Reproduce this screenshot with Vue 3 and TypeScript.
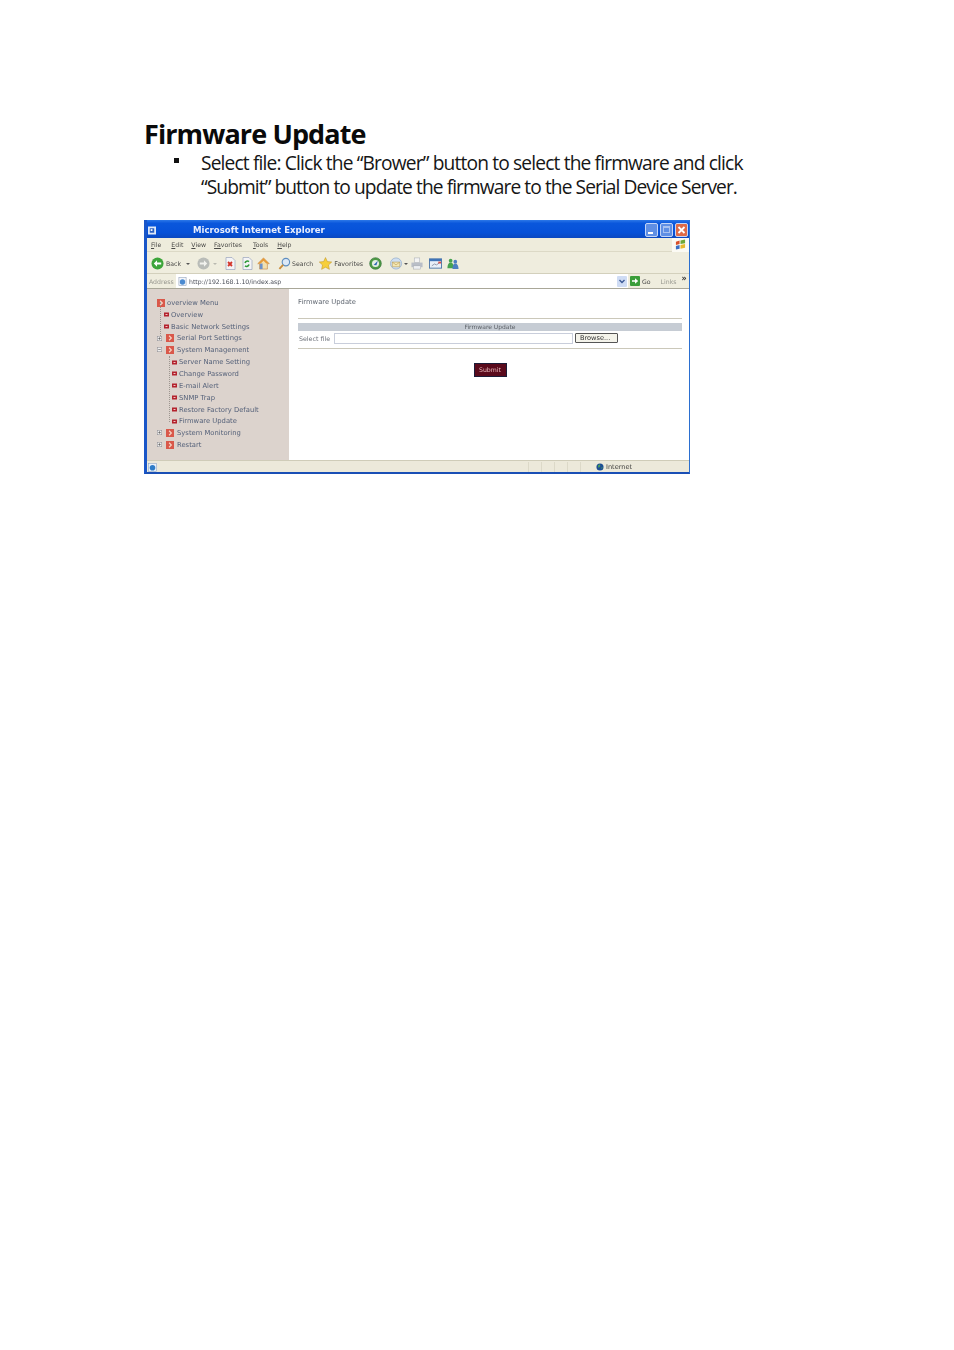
<script setup lang="ts">
interface TreeRow {
  label: string
  kind: 'root' | 'leaf' | 'folder' | 'sub'
  toggle?: '+' | '-'
}

const menus = [
  { key: 'F', rest: 'ile', cls: 'm-file' },
  { key: 'E', rest: 'dit', cls: 'm-edit' },
  { key: 'V', rest: 'iew', cls: 'm-view' },
  { key: 'Fa', rest: 'vorites', cls: 'm-fav' },
  { key: 'T', rest: 'ools', cls: 'm-tools' },
  { key: 'H', rest: 'elp', cls: 'm-help' },
]

const rows: TreeRow[] = [
  { label: 'overview Menu', kind: 'root' },
  { label: 'Overview', kind: 'leaf' },
  { label: 'Basic Network Settings', kind: 'leaf' },
  { label: 'Serial Port Settings', kind: 'folder', toggle: '+' },
  { label: 'System Management', kind: 'folder', toggle: '-' },
  { label: 'Server Name Setting', kind: 'sub' },
  { label: 'Change Password', kind: 'sub' },
  { label: 'E-mail Alert', kind: 'sub' },
  { label: 'SNMP Trap', kind: 'sub' },
  { label: 'Restore Factory Default', kind: 'sub' },
  { label: 'Firmware Update', kind: 'sub' },
  { label: 'System Monitoring', kind: 'folder', toggle: '+' },
  { label: 'Restart', kind: 'folder', toggle: '+' },
]
</script>

<template>
  <main class="page">
    <h1 class="title">Firmware Update</h1>
    <ul class="bullets">
      <li>
        <span class="line1">Select file: Click the “Brower” button to select the firmware and click</span>
        <span class="line2">“Submit” button to update the firmware to the Serial Device Server.</span>
      </li>
    </ul>

    <section class="window">
      <header class="titlebar">
        <svg class="app-icon" viewBox="0 0 9 9"><rect width="9" height="9" fill="#dfe9f8" /><rect x="2" y="2" width="5" height="5" fill="#2a5fc0" /><rect x="3" y="3" width="2" height="2" fill="#fff" /></svg>
        <span class="caption">Microsoft Internet Explorer</span>
        <div class="win-btns">
          <span class="wb wb-min"><i class="glyph-min"></i></span>
          <span class="wb wb-max"><i class="glyph-max"></i></span>
          <span class="wb wb-close">
            <svg viewBox="0 0 13 13"><path d="M3.5 3.5l6 6M9.5 3.5l-6 6" stroke="#fff" stroke-width="1.8" /></svg>
          </span>
        </div>
      </header>

      <nav class="menubar">
        <span v-for="m in menus" :key="m.cls" class="menu-item" :class="m.cls"><u>{{ m.key }}</u>{{ m.rest }}</span>
        <span class="flag-box">
          <svg viewBox="0 0 12 12" class="flag"><path d="M1 3l4-1.500v4l-4 1z" fill="#d8502a" /><path d="M6 1.500l5-1v4l-5 1z" fill="#6fa838" /><path d="M1 7.500l4-1v4l-4 1z" fill="#3b6fc4" /><path d="M6 6.500l5-1v4l-5 1z" fill="#e8b92e" /></svg>
        </span>
      </nav>

      <div class="toolbar">
        <svg class="ti t-back" viewBox="0 0 14 14"><circle cx="7" cy="7" r="6.500" fill="#3da53a" /><path d="M11 6H6.500V3.500L3 7l3.500 3.500V8H11z" fill="#fff" /></svg>
        <span class="tt t-back-l">Back</span>
        <i class="caret c-back"></i>
        <svg class="ti t-fwd" viewBox="0 0 14 14"><circle cx="7" cy="7" r="6.500" fill="#b9bcb8" /><path d="M3 6h4.500V3.500L11 7l-3.500 3.500V8H3z" fill="#f2f2ee" /></svg>
        <i class="caret c-fwd"></i>
        <svg class="ti t-stop" viewBox="0 0 12 13"><path d="M2 .5h6l3 3v9H2z" fill="#f4f4f6" stroke="#9aa3bd" stroke-width=".7" /><path d="M4 5l4 4M8 5L4 9" stroke="#d3352a" stroke-width="1.800" /></svg>
        <svg class="ti t-ref" viewBox="0 0 12 13"><path d="M2 .5h6l3 3v9H2z" fill="#f4f4f6" stroke="#9aa3bd" stroke-width=".7" /><path d="M4 6a2.500 2.500 0 0 1 4-1.300M8 7.500a2.500 2.500 0 0 1-4 1.300" fill="none" stroke="#2f9a3a" stroke-width="1.500" /></svg>
        <svg class="ti t-home" viewBox="0 0 14 14"><path d="M7 1L.8 7.200h2V13h8.400V7.200h2z" fill="#f2dfae" stroke="#c07a30" stroke-width=".6" /><rect x="3" y="7" width="3" height="6" fill="#6d90c8" /><path d="M7 1L1 7h3l3-3 3 3h3z" fill="#e59a3a" /></svg>
        <svg class="ti t-search" viewBox="0 0 14 14"><circle cx="8.500" cy="5.500" r="4" fill="#dce9f7" stroke="#5e8ec0" stroke-width="1.200" /><path d="M5.500 8.500L1.500 12.800" stroke="#c98d3b" stroke-width="2" /></svg>
        <span class="tt t-search-l">Search</span>
        <svg class="ti t-star" viewBox="0 0 14 14"><path d="M7 .6l2 4.300 4.700.5-3.500 3.200 1 4.700L7 11l-4.200 2.300 1-4.700L.3 5.400 5 4.900z" fill="#f6cf3b" stroke="#b68a1e" stroke-width=".5" /></svg>
        <span class="tt t-star-l">Favorites</span>
        <svg class="ti t-media" viewBox="0 0 14 14"><circle cx="7" cy="7" r="6.300" fill="#4e9a45" stroke="#2e6a35" stroke-width=".6" /><circle cx="7" cy="7" r="3.800" fill="#e5efe2" /><path d="M5 8.500L9.500 4 8 9z" fill="#2f67b4" /></svg>
        <svg class="ti t-mail" viewBox="0 0 14 14"><circle cx="6.500" cy="7" r="6" fill="#cfdff2" stroke="#7c9cc6" stroke-width=".6" /><path d="M2.500 5.500h8v5h-8z" fill="#f5e7b3" stroke="#b3974d" stroke-width=".6" /><path d="M2.500 5.500l4 3 4-3" fill="none" stroke="#b3974d" stroke-width=".6" /></svg>
        <i class="caret c-mail"></i>
        <svg class="ti t-print" viewBox="0 0 14 14"><rect x="4" y="1" width="6" height="5" fill="#f4f4f4" stroke="#9ea3ab" stroke-width=".5" /><path d="M1 6h12v5H1z" fill="#b9bec7" /><rect x="3" y="9.500" width="8" height="3.500" fill="#eef0f2" stroke="#9ea3ab" stroke-width=".5" /></svg>
        <svg class="ti t-edit" viewBox="0 0 14 14"><rect x=".5" y="2" width="13" height="10" fill="#e9eff7" stroke="#4d76a8" /><rect x=".5" y="2" width="13" height="2.500" fill="#3f74b7" /><path d="M3 9.500l3-2 2 1 3-2" fill="none" stroke="#8a94a8" /><rect x="10" y="5" width="3" height="2" fill="#d9504a" /></svg>
        <svg class="ti t-msg" viewBox="0 0 14 14"><circle cx="5" cy="4" r="2" fill="#46a350" /><path d="M1.500 12c0-4 1.500-6 3.500-6s3.500 2 3.500 6z" fill="#46a350" /><circle cx="10" cy="5" r="2" fill="#4b7fc2" /><path d="M7 13c0-4 1-6 3-6s3.500 2 3.500 6z" fill="#4b7fc2" /></svg>
      </div>

      <div class="addressbar">
        <span class="addr-label">Address</span>
        <div class="addr-input">
          <svg class="page-icon" viewBox="0 0 10 10"><rect x="1" y=".5" width="8" height="9" fill="#f4f6fa" stroke="#8b9bb5" stroke-width=".6" /><circle cx="5" cy="5.500" r="3" fill="#4b8ad0" /></svg>
          <span class="addr-url">http://192.168.1.10/index.asp</span>
          <span class="addr-drop">
            <svg viewBox="0 0 10 10"><path d="M2.500 3.500L5 6l2.500-2.500" fill="none" stroke="#3c5a96" stroke-width="1.400" /></svg>
          </span>
        </div>
        <svg class="go-icon" viewBox="0 0 10 10"><rect width="10" height="10" rx="1" fill="#3b9e3a" /><path d="M2 4.200h3V2.300L8.200 5 5 7.700V5.800H2z" fill="#fff" /></svg>
        <span class="go-label">Go</span>
        <span class="links">Links</span>
        <span class="chev">»</span>
      </div>

      <div class="client">
        <aside class="sidebar">
          <ul class="tree">
            <li v-for="r in rows" :key="r.label" class="row" :class="'row-' + r.kind">
              <svg v-if="r.toggle" class="toggle" viewBox="0 0 5 5">
                <rect x=".25" y=".25" width="4.500" height="4.500" fill="#eeeeee" stroke="#8a8a90" stroke-width=".5" />
                <path d="M1.200 2.500h2.600" stroke="#555" stroke-width=".6" />
                <path v-if="r.toggle === '+'" d="M2.500 1.200v2.600" stroke="#555" stroke-width=".6" />
              </svg>
              <svg v-if="r.kind === 'root' || r.kind === 'folder'" class="folder-icon" viewBox="0 0 9 9">
                <rect width="9" height="9" fill="#d9584a" />
                <path d="M3.500 2L6 4.500 3.500 7" fill="none" stroke="#f6d8c8" stroke-width="1.300" />
              </svg>
              <svg v-else class="leaf-icon" viewBox="0 0 5 5">
                <rect y=".5" width="5" height="4" fill="#b3222d" />
                <rect x="1.500" y="2" width="2" height="1" fill="#f0c4c4" />
              </svg>
              <span class="label">{{ r.label }}</span>
            </li>
          </ul>
          <i class="vline vline-top"></i>
          <i class="vline vline-sub"></i>
        </aside>

        <div class="content">
          <p class="heading">Firmware Update</p>
          <hr class="rule rule-top" />
          <div class="band">Firmware Update</div>
          <div class="file-row">
            <span class="file-label">Select file</span>
            <span class="file-input"></span>
            <span class="browse">Browse...</span>
          </div>
          <hr class="rule rule-bottom" />
          <div class="submit-wrap"><span class="submit">Submit</span></div>
        </div>
      </div>

      <footer class="statusbar">
        <svg class="status-ie" viewBox="0 0 9 9"><rect x=".5" y=".5" width="8" height="8" fill="#e9f1fb" stroke="#7f9cc4" stroke-width=".5" /><circle cx="4.500" cy="4.800" r="2.800" fill="#2f7dc8" /></svg>
        <span class="cell c1"></span>
        <span class="cell"></span>
        <span class="cell"></span>
        <span class="cell"></span>
        <span class="cell"></span>
        <svg class="globe" viewBox="0 0 9 9"><circle cx="4.500" cy="4.500" r="4" fill="#1d4f94" /><path d="M2 3l2-1.500 1 2-2 2zM6 5l1.500-.5L6.500 7z" fill="#4aa25a" /></svg>
        <span class="zone">Internet</span>
      </footer>
    </section>
  </main>
</template>

<style scoped>
.page {
  box-sizing: border-box;
  width: 954px;
  height: 1350px;
  padding: 118px 0 0 144px;
  background: #fff;
  color: #111;
  font-family: "Noto Sans", "Open Sans", sans-serif;
}
.title {
  margin: 0 0 1px;
  font-family: "Open Sans", sans-serif;
  font-size: 27px;
  line-height: 32px;
  font-weight: 700;
  letter-spacing: -0.9px;
  color: #0a0a0a;
}
.bullets {
  list-style: none;
  margin: 0;
  padding: 0 0 0 57px;
  position: relative;
  font-family: "Open Sans", sans-serif;
  font-size: 19.2px;
  line-height: 24px;
  letter-spacing: -0.85px;
  color: #161616;
}
.bullets::before {
  content: "";
  position: absolute;
  left: 30px;
  top: 7px;
  width: 5px;
  height: 5px;
  background: #111;
}
.line1,
.line2 {
  display: block;
  white-space: nowrap;
}
.line2 {
  letter-spacing: -0.93px;
}
.window {
  box-sizing: border-box;
  width: 546px;
  height: 254px;
  margin-top: 21px;
  display: flex;
  flex-direction: column;
  border-left: 3px solid #1a56c8;
  border-right: 1px solid #2b6fd0;
  border-bottom: 2px solid #1a4fb5;
  font-family: "DejaVu Sans", Verdana, sans-serif;
  overflow: hidden;
  background: #fff;
  filter: blur(0.35px);
}
.titlebar {
  box-sizing: border-box;
  height: 18px;
  margin-left: -3px;
  margin-right: -1px;
  padding-left: 4px;
  padding-top: 2px;
  display: flex;
  align-items: center;
  flex: none;
  background: linear-gradient(180deg, #2c78e8 0%, #0a57dc 18%, #0651d8 70%, #0a48c0 100%);
}
.app-icon {
  width: 8px;
  height: 9px;
}
.caption {
  margin-left: 37px;
  font-size: 8.6px;
  font-weight: 700;
  color: #e9eefc;
  white-space: nowrap;
}
.win-btns {
  margin-left: auto;
  margin-right: 2px;
  display: flex;
  gap: 2px;
}
.wb {
  position: relative;
  display: block;
  box-sizing: border-box;
  width: 13px;
  height: 14px;
  border-radius: 2px;
  border: 1px solid #c3d5f7;
  background: #5f8fe4;
}
.wb-close {
  background: #dd6a48;
}
.wb-close svg {
  position: absolute;
  left: -1px;
  top: -1px;
  width: 13px;
  height: 14px;
}
.glyph-min {
  position: absolute;
  left: 2px;
  bottom: 2px;
  width: 5px;
  height: 2px;
  background: #fff;
}
.glyph-max {
  position: absolute;
  left: 2px;
  top: 2px;
  width: 7px;
  height: 7px;
  box-sizing: border-box;
  border: 1px solid #a9c2f0;
  border-top-width: 2px;
}
.menubar {
  position: relative;
  height: 14px;
  flex: none;
  display: flex;
  align-items: center;
  background: #eeecdc;
  border-bottom: 1px solid #dcd9c6;
  box-sizing: border-box;
  font-size: 6.2px;
  color: #4a4a48;
}
.menu-item {
  white-space: nowrap;
}
.menu-item u {
  text-underline-offset: 1px;
}
.m-file { margin-left: 4px; }
.m-edit { margin-left: 10px; }
.m-view { margin-left: 8px; }
.m-fav { margin-left: 8px; }
.m-tools { margin-left: 11px; }
.m-help { margin-left: 9px; }
.flag-box {
  margin-left: auto;
  width: 17px;
  height: 14px;
  display: flex;
  align-items: center;
  justify-content: center;
  background: #fbfaf4;
}
.flag {
  width: 11px;
  height: 11px;
}
.toolbar {
  height: 22px;
  padding-top: 2px;
  flex: none;
  display: flex;
  align-items: center;
  background: #efedde;
  border-bottom: 1px solid #d3d0bc;
  box-sizing: border-box;
  font-size: 6.2px;
  color: #4a4a48;
}
.ti {
  flex: none;
  width: 13px;
  height: 13px;
}
.tt {
  white-space: nowrap;
}
.caret {
  flex: none;
  width: 0;
  height: 0;
  border-left: 2px solid transparent;
  border-right: 2px solid transparent;
  border-top: 2px solid #555;
}
.t-back { margin-left: 4px; }
.t-back-l { margin-left: 2px; }
.c-back { margin-left: 5px; }
.t-fwd { margin-left: 7px; }
.c-fwd { margin-left: 3px; border-top-color: #b9b9b0; }
.t-stop { margin-left: 7px; width: 12px; }
.t-ref { margin-left: 5px; width: 12px; }
.t-home { margin-left: 4px; }
.t-search { margin-left: 8px; }
.t-search-l { margin-left: 1px; }
.t-star { margin-left: 6px; }
.t-star-l { margin-left: 2px; font-size: 6.4px; }
.t-media { margin-left: 6px; }
.t-mail { margin-left: 8px; }
.c-mail { margin-left: 1px; }
.t-print { margin-left: 2px; width: 14px; }
.t-edit { margin-left: 5px; }
.t-msg { margin-left: 4px; }
.addressbar {
  position: relative;
  height: 15px;
  flex: none;
  display: flex;
  align-items: center;
  background: #efedde;
  border-bottom: 1px solid #a9a798;
  box-sizing: border-box;
  font-size: 6.2px;
}
.addr-label {
  margin-left: 2px;
  width: 27px;
  color: #96968e;
  flex: none;
}
.addr-input {
  width: 452px;
  height: 14px;
  flex: none;
  display: flex;
  align-items: center;
  background: #fff;
  color: #4a4e58;
}
.page-icon {
  margin-left: 2px;
  width: 9px;
  height: 9px;
}
.addr-url {
  margin-left: 2px;
  white-space: nowrap;
}
.addr-drop {
  margin-left: auto;
  margin-right: 1px;
  width: 10px;
  height: 11px;
  background: #cfdcf4;
  border-radius: 1px;
}
.addr-drop svg {
  display: block;
  width: 10px;
  height: 11px;
}
.go-icon {
  flex: none;
  margin-left: 2px;
  width: 10px;
  height: 10px;
}
.go-label {
  margin-left: 2px;
  color: #4a4a48;
}
.links {
  margin-left: 10px;
  color: #96968e;
}
.chev {
  margin-left: 5px;
  margin-top: -5px;
  font-size: 8px;
  font-weight: 700;
  color: #333;
}
.client {
  flex: 1;
  min-height: 0;
  display: flex;
}
.sidebar {
  position: relative;
  box-sizing: border-box;
  flex: none;
  width: 142px;
  padding-top: 8px;
  background: #dcd3cd;
}
.tree {
  list-style: none;
  margin: 0;
  padding: 0;
}
.row {
  position: relative;
  display: flex;
  align-items: center;
  height: 11.85px;
  font-size: 6.8px;
  color: #56627a;
  white-space: nowrap;
}
.row-root { padding-left: 10px; }
.row-leaf { padding-left: 17px; }
.row-folder { padding-left: 19px; }
.row-sub { padding-left: 25px; }
.label {
  margin-left: 2px;
}
.row-folder .label {
  margin-left: 3px;
}
.folder-icon {
  flex: none;
  width: 8px;
  height: 8px;
}
.leaf-icon {
  flex: none;
  width: 5px;
  height: 5px;
}
.toggle {
  position: absolute;
  left: 10px;
  top: 3px;
  width: 5px;
  height: 5px;
}
.vline {
  position: absolute;
  border-left: 1px dotted #9d9690;
}
.vline-top {
  left: 13px;
  top: 13px;
  height: 34px;
}
.vline-sub {
  left: 22px;
  top: 67px;
  height: 66px;
}
.content {
  flex: 1;
  min-width: 0;
  padding: 8px 7px 0 9px;
  background: #fff;
}
.heading {
  margin: 0;
  height: 10px;
  font-size: 6.8px;
  line-height: 10px;
  color: #5f6670;
}
.rule {
  margin: 0;
  border: 0;
  height: 1px;
  background: #cbc8ba;
}
.rule-top {
  margin-top: 11px;
}
.band {
  margin-top: 4px;
  height: 8px;
  background: #c6ccd4;
  text-align: center;
  font-size: 6px;
  line-height: 8px;
  color: #5c6168;
}
.file-row {
  display: flex;
  align-items: center;
  height: 14px;
  font-size: 6.3px;
  color: #6c7078;
}
.file-label {
  margin-left: 1px;
  width: 35px;
  flex: none;
  white-space: nowrap;
}
.file-input {
  box-sizing: border-box;
  width: 239px;
  height: 11px;
  flex: none;
  border: 1px solid #c9cedb;
  background: #fff;
}
.browse {
  box-sizing: border-box;
  margin-left: 2px;
  width: 43px;
  height: 10px;
  flex: none;
  border: 1px solid #555;
  border-radius: 1px;
  background: #f4f3ea;
  color: #333;
  font-size: 6.6px;
  line-height: 8px;
  padding-left: 4px;
}
.rule-bottom {
  margin-top: 3px;
}
.submit-wrap {
  margin-top: 14px;
  display: flex;
  justify-content: center;
}
.submit {
  box-sizing: border-box;
  width: 33px;
  height: 14px;
  border: 1px solid #1c1c38;
  background: #5a0a1c;
  color: #e8b8bc;
  font-size: 6.2px;
  line-height: 12px;
  text-align: center;
}
.statusbar {
  height: 12px;
  padding-top: 1px;
  flex: none;
  display: flex;
  align-items: center;
  background: #ece9da;
  border-top: 1px solid #cfccb8;
  box-sizing: border-box;
  font-size: 6.6px;
  color: #3e3e3c;
}
.status-ie {
  margin-left: 1px;
  width: 9px;
  height: 9px;
}
.cell {
  width: 13px;
  height: 10px;
  flex: none;
  box-sizing: border-box;
  border-left: 1px solid #dcd9c8;
}
.c1 {
  margin-left: 371px;
}
.globe {
  margin-left: 3px;
  width: 8px;
  height: 8px;
}
.zone {
  margin-left: 2px;
}
</style>

<style>
html,
body {
  margin: 0;
  background: #fff;
}
</style>
